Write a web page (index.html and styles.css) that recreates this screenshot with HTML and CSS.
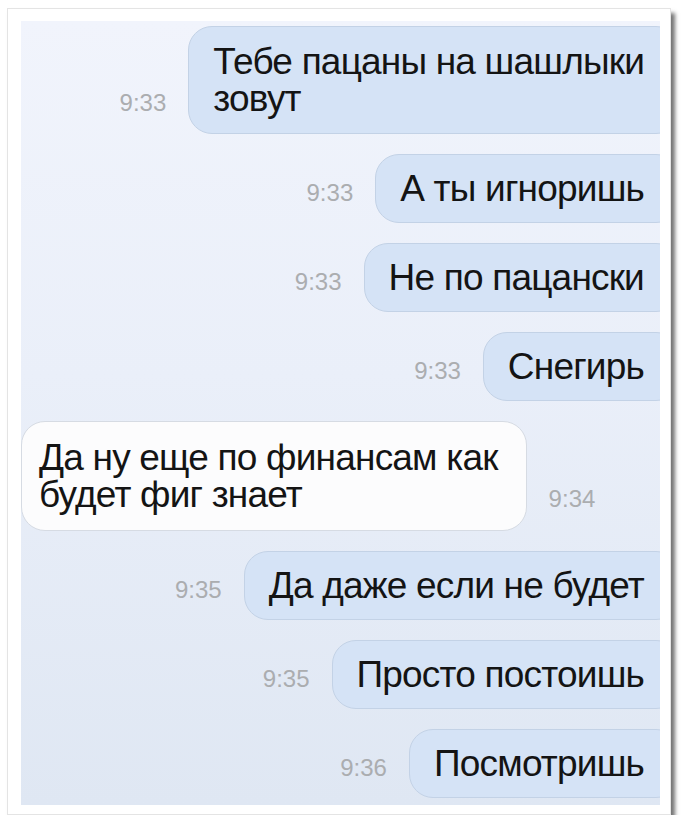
FILE: index.html
```html
<!DOCTYPE html>
<html lang="ru">
<head>
<meta charset="utf-8">
<title>Чат</title>
<link rel="stylesheet" href="styles.css">
</head>
<body>
<div class="frame">
  <div class="chat">
    <div class="row out">
      <span class="time">9:33</span>
      <div class="bubble out-b tall">Тебе пацаны на шашлыки<br>зовут</div>
    </div>
    <div class="row out">
      <span class="time">9:33</span>
      <div class="bubble out-b">А ты игноришь</div>
    </div>
    <div class="row out">
      <span class="time">9:33</span>
      <div class="bubble out-b">Не по пацански</div>
    </div>
    <div class="row out">
      <span class="time">9:33</span>
      <div class="bubble out-b">Снегирь</div>
    </div>
    <div class="row in">
      <div class="bubble in-b">Да ну еще по финансам как<br>будет фиг знает</div>
      <span class="time">9:34</span>
    </div>
    <div class="row out">
      <span class="time">9:35</span>
      <div class="bubble out-b">Да даже если не будет</div>
    </div>
    <div class="row out">
      <span class="time">9:35</span>
      <div class="bubble out-b">Просто постоишь</div>
    </div>
    <div class="row out">
      <span class="time">9:36</span>
      <div class="bubble out-b">Посмотришь</div>
    </div>
  </div>
</div>
</body>
</html>
```
FILE: styles.css
```css
html, body {
  margin: 0;
  padding: 0;
  background: #ffffff;
}

body {
  font-family: "Liberation Sans", Arial, sans-serif;
}

.frame {
  margin: 8px 0 0 7px;
  width: 664px;
  box-sizing: border-box;
  padding: 12px 12px 9px 13px;
  background: #ffffff;
  border: 1px solid #e4e4e4;
  box-shadow: 4px 5px 4px rgba(0, 0, 0, 0.55);
}

.chat {
  width: 639px;
  height: 784px;
  overflow: hidden;
  box-sizing: border-box;
  padding-top: 5px;
  display: flex;
  flex-direction: column;
  gap: 20px;
  background: linear-gradient(180deg, #f1f4fc 0%, #eaeff9 45%, #dfe7f3 100%);
}

.row {
  display: flex;
  align-items: last baseline;
  gap: 22px;
}

.row.out {
  justify-content: flex-end;
}

.row.in {
  justify-content: flex-start;
}

.time {
  font-size: 24px;
  color: #abadb0;
}

.bubble {
  font-size: 37px;
  line-height: 37px;
  letter-spacing: -0.8px;
  color: #141414;
  white-space: nowrap;
  border-radius: 24px;
  box-sizing: border-box;
}

.out-b {
  background: #d5e3f6;
  border: 1px solid #c3d2e6;
  padding: 15px 35px 15px 24px;
  margin-right: -20px;
}

.out-b.tall {
  padding-top: 16px;
  padding-bottom: 16px;
}

.in-b {
  background: #fcfcfd;
  border: 1px solid #d6dbe3;
  padding: 17px 28px 17px 17px;
}
```
